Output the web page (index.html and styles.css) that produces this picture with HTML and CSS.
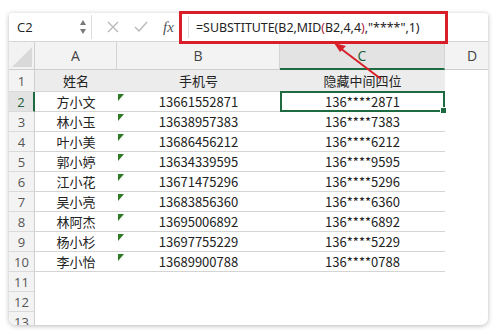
FILE: index.html
```html
<!DOCTYPE html>
<html lang="zh">
<head>
<meta charset="utf-8">
<link rel="stylesheet" href="styles.css">
</head>
<body>
<div class="stage">
  <div class="window">
    <div class="fbar">
      <div class="namebox">
        <span class="ref">C2</span>
        <span class="spin"><span class="up"></span><span class="down"></span></span>
      </div>
      <div class="tools">
        <svg class="ic" width="14" height="14" viewBox="0 0 14 14"><path d="M2 2L12 12M12 2L2 12" stroke="#b9b9b9" stroke-width="1.4" fill="none"/></svg>
        <svg class="ic" width="16" height="14" viewBox="0 0 16 14"><path d="M2 7L6 11L14 2" stroke="#b9b9b9" stroke-width="1.4" fill="none"/></svg>
        <span class="fx">fx</span>
      </div>
      <div class="formula">=SUBSTITUTE(B2,MID<span class="p">(</span>B2,4,4<span class="p">)</span>,"****",1)</div>
    </div>
    <div class="sheet">
      <div class="corner"></div>
      <div class="ch">A</div>
      <div class="ch">B</div>
      <div class="ch sel">C</div>
      <div class="ch last">D</div>

      <div class="rh">1</div>
      <div class="c hd">姓名</div>
      <div class="c hd">手机号</div>
      <div class="c hd">隐藏中间四位</div>
      <div class="e"></div>

      <div class="rh cur">2</div>
      <div class="c">方小文</div>
      <div class="c tri">13661552871</div>
      <div class="c active">136****2871<span class="handle"></span></div>
      <div class="e"></div>

      <div class="rh">3</div>
      <div class="c">林小玉</div>
      <div class="c tri">13638957383</div>
      <div class="c">136****7383</div>
      <div class="e"></div>

      <div class="rh">4</div>
      <div class="c">叶小美</div>
      <div class="c tri">13686456212</div>
      <div class="c">136****6212</div>
      <div class="e"></div>

      <div class="rh">5</div>
      <div class="c">郭小婷</div>
      <div class="c tri">13634339595</div>
      <div class="c">136****9595</div>
      <div class="e"></div>

      <div class="rh">6</div>
      <div class="c">江小花</div>
      <div class="c tri">13671475296</div>
      <div class="c">136****5296</div>
      <div class="e"></div>

      <div class="rh">7</div>
      <div class="c">吴小亮</div>
      <div class="c tri">13683856360</div>
      <div class="c">136****6360</div>
      <div class="e"></div>

      <div class="rh">8</div>
      <div class="c">林阿杰</div>
      <div class="c tri">13695006892</div>
      <div class="c">136****6892</div>
      <div class="e"></div>

      <div class="rh">9</div>
      <div class="c">杨小杉</div>
      <div class="c tri">13697755229</div>
      <div class="c">136****5229</div>
      <div class="e"></div>

      <div class="rh">10</div>
      <div class="c">李小怡</div>
      <div class="c tri">13689900788</div>
      <div class="c">136****0788</div>
      <div class="e"></div>

      <div class="rh">11</div>
      <div class="e wide"></div>
      <div class="rh">12</div>
      <div class="e wide"></div>
      <div class="rh">13</div>
      <div class="e wide"></div>
    </div>
  </div>
  <div class="callout"></div>
  <svg class="arrow" width="497" height="334" viewBox="0 0 497 334">
    <line x1="381" y1="79" x2="340" y2="48" stroke="#d81e28" stroke-width="2"/>
    <polygon points="334,43 346,46 340,52" fill="#d81e28"/>
  </svg>
</div>
</body>
</html>
```
FILE: styles.css
```css
html, body {
  margin: 0;
  padding: 0;
  background: #ffffff;
}
body {
  width: 497px;
  height: 334px;
  overflow: hidden;
  font-family: "Noto Sans CJK SC", "Noto Sans", sans-serif;
  color: #222;
}
.stage {
  position: relative;
  width: 497px;
  height: 334px;
  padding: 13px 9px 9px 9px;
  box-sizing: border-box;
}
.window {
  width: 479px;
  height: 312px;
  background: #fff;
  border-radius: 3px 3px 7px 7px;
  box-shadow: 0 1px 5px rgba(0,0,0,0.28);
  overflow: hidden;
  display: flex;
  flex-direction: column;
}
.fbar {
  height: 29px;
  flex: none;
  display: flex;
  align-items: stretch;
  border-bottom: 1px solid #d6d6d6;
  box-sizing: border-box;
}
.namebox {
  width: 83px;
  border-right: 1px solid #dcdcdc;
  display: flex;
  align-items: center;
  justify-content: space-between;
  padding: 0 5px 0 8px;
  box-sizing: border-box;
  margin: 2px 0;
}
.ref {
  font-family: "Open Sans", "Noto Sans", sans-serif;
  font-size: 13px;
  color: #222;
}
.spin {
  display: flex;
  flex-direction: column;
  gap: 4px;
}
.spin .up, .spin .down {
  width: 0;
  height: 0;
  border-left: 3.5px solid transparent;
  border-right: 3.5px solid transparent;
}
.spin .up { border-bottom: 5px solid #7a7a7a; }
.spin .down { border-top: 5px solid #7a7a7a; }
.tools {
  width: 96px;
  display: flex;
  align-items: center;
  padding-left: 14px;
  gap: 13px;
  box-sizing: border-box;
}
.fx {
  font-family: "Liberation Serif", serif;
  font-style: italic;
  font-size: 15px;
  color: #555;
  margin-left: 1px;
}
.formula {
  flex: 1;
  display: flex;
  align-items: center;
  padding-left: 7px;
  border-left: 1px solid #dcdcdc;
  margin: 3px 0;
  font-family: "Noto Sans", sans-serif;
  font-size: 12.4px;
  color: #222;
  white-space: pre;
}
.formula .p { color: #b0243a; }

.sheet {
  flex: 1;
  display: grid;
  grid-template-columns: 26px 82px 163px 165px 1fr;
  grid-template-rows: 28px 22px repeat(12, 20px);
  overflow: hidden;
}
.corner {
  background: #f2f2f2;
  border-right: 1px solid #cfcfcf;
  border-bottom: 1px solid #cfcfcf;
  position: relative;
  box-sizing: border-box;
}
.corner::after {
  content: "";
  position: absolute;
  right: 2px;
  bottom: 2px;
  width: 0;
  height: 0;
  border-left: 20px solid transparent;
  border-bottom: 20px solid #d9d9d9;
}
.ch {
  background: #f3f3f3;
  border-right: 1px solid #d3d3d3;
  border-bottom: 1px solid #cfcfcf;
  box-sizing: border-box;
  display: flex;
  align-items: center;
  justify-content: center;
  font-family: "Open Sans", "Noto Sans", sans-serif;
  font-size: 14px;
  color: #444;
}
.ch.sel {
  background: #e3e3e3;
  border-bottom: 2px solid #1e6b41;
  color: #1e5f3a;
}
.ch.last {
  border-right: none;
  justify-content: flex-start;
  padding-left: 22px;
}
.rh {
  background: #f3f3f3;
  border-right: 1px solid #cfcfcf;
  border-bottom: 1px solid #dadada;
  box-sizing: border-box;
  display: flex;
  align-items: center;
  justify-content: center;
  font-family: "Open Sans", "Noto Sans", sans-serif;
  font-size: 13px;
  color: #555;
}
.rh.cur {
  background: #e3e3e3;
  border-right: 2px solid #1e6b41;
  color: #1e5f3a;
}
.c {
  position: relative;
  border-bottom: 1px solid #d4d4d4;
  box-sizing: border-box;
  display: flex;
  align-items: center;
  justify-content: center;
  font-size: 13px;
  color: #222;
}
.c.hd {
  background: #ececec;
}
.c.tri::before {
  content: "";
  position: absolute;
  left: 1px;
  top: 2px;
  width: 0;
  height: 0;
  border-top: 7px solid #2c7a22;
  border-right: 6px solid transparent;
}
.c.active {
  border: 2px solid #1e6b41;
  margin-top: -1px;
}
.handle {
  position: absolute;
  right: -4px;
  bottom: -4px;
  width: 5px;
  height: 5px;
  background: #1e6b41;
  border: 1px solid #fff;
}
.e.wide {
  grid-column: 2 / 6;
}
.callout {
  position: absolute;
  left: 179px;
  top: 11px;
  width: 269px;
  height: 33px;
  border: 3px solid #d81e28;
  box-sizing: border-box;
}
.arrow {
  position: absolute;
  left: 0;
  top: 0;
  pointer-events: none;
}
```
